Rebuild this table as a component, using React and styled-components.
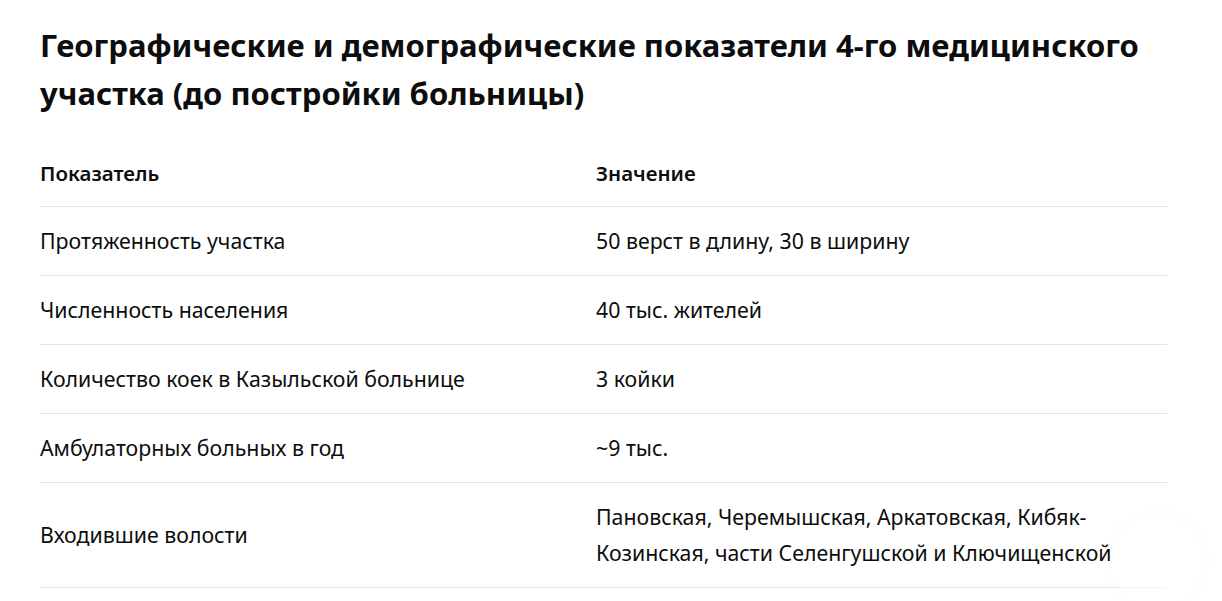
import React from "react";
import styled, { createGlobalStyle } from "styled-components";

const rows = [
  ["Протяженность участка", "50 верст в длину, 30 в ширину"],
  ["Численность населения", "40 тыс. жителей"],
  ["Количество коек в Казыльской больнице", "3 койки"],
  ["Амбулаторных больных в год", "~9 тыс."],
  [
    "Входившие волости",
    "Пановская, Черемышская, Аркатовская, Кибяк-Козинская, части Селенгушской и Ключищенской",
  ],
];

export default function App() {
  return (
    <>
      <GlobalStyle />
      <Page>
        <Title>
          Географические и демографические показатели 4-го медицинского
          участка (до постройки больницы)
        </Title>
        <Table>
          <thead>
            <tr>
              <HeadCell>Показатель</HeadCell>
              <HeadCell>Значение</HeadCell>
            </tr>
          </thead>
          <tbody>
            {rows.map(([name, value]) => (
              <Row key={name}>
                <Cell>{name}</Cell>
                <Cell>{value}</Cell>
              </Row>
            ))}
          </tbody>
        </Table>
      </Page>
      <ScrollButton />
    </>
  );
}

const GlobalStyle = createGlobalStyle`
  body {
    margin: 0;
    background: #ffffff;
    font-family: "Noto Sans", "Open Sans", sans-serif;
    color: #0d0d0d;
  }
`;

const Page = styled.div`
  padding: 21px 55px 0 40px;
`;

const Title = styled.h2`
  margin: 0 0 22px;
  font-size: 31px;
  line-height: 48px;
  font-weight: 700;
  color: #0d0d0d;
`;

const Table = styled.table`
  width: 1127px;
  border-collapse: collapse;
  font-size: 21.3px;
  line-height: 36px;
`;

const HeadCell = styled.th`
  width: 556px;
  text-align: left;
  font-weight: 600;
  font-size: 20.5px;
  padding: 16px 0 15px;
  border-bottom: 1px solid #e3e3e3;
  &:last-child {
    width: auto;
  }
`;

const Row = styled.tr`
  border-bottom: 1px solid #e3e3e3;
`;

const Cell = styled.td`
  padding: 16px 40px 16px 0;
  vertical-align: middle;
  font-weight: 400;
  color: #0d0d0d;
`;

const ScrollButton = styled.div`
  position: fixed;
  right: 19px;
  bottom: -6px;
  width: 92px;
  height: 92px;
  border-radius: 50%;
  background: rgba(255, 255, 255, 0.6);
  box-shadow: 0 0 20px rgba(0, 0, 0, 0.018);
`;
